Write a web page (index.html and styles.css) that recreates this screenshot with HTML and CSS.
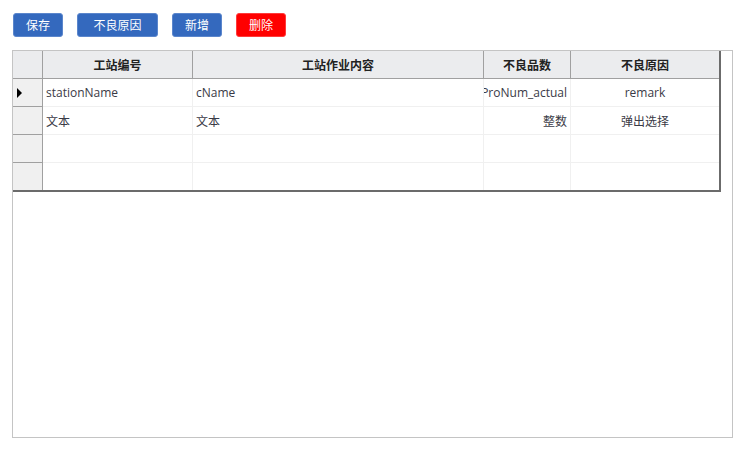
FILE: index.html
```html
<!DOCTYPE html>
<html>
<head>
<meta charset="utf-8">
<link rel="stylesheet" href="styles.css">
</head>
<body>
<div class="toolbar">
  <button class="btn w50">保存</button>
  <button class="btn w81">不良原因</button>
  <button class="btn w50">新增</button>
  <button class="btn w50 danger">删除</button>
</div>
<div class="panel">
  <div class="grid">
    <div class="row head">
      <div class="rh"></div>
      <div class="c c1">工站编号</div>
      <div class="c c2">工站作业内容</div>
      <div class="c c3">不良品数</div>
      <div class="c c4">不良原因</div>
    </div>
    <div class="row">
      <div class="rh"><span class="arrow"></span></div>
      <div class="c c1 left">stationName</div>
      <div class="c c2 left">cName</div>
      <div class="c c3 right">ProNum_actual</div>
      <div class="c c4 center">remark</div>
    </div>
    <div class="row">
      <div class="rh"></div>
      <div class="c c1 left">文本</div>
      <div class="c c2 left">文本</div>
      <div class="c c3 right">整数</div>
      <div class="c c4 center">弹出选择</div>
    </div>
    <div class="row">
      <div class="rh"></div>
      <div class="c c1"></div>
      <div class="c c2"></div>
      <div class="c c3"></div>
      <div class="c c4"></div>
    </div>
    <div class="row last">
      <div class="rh"></div>
      <div class="c c1"></div>
      <div class="c c2"></div>
      <div class="c c3"></div>
      <div class="c c4"></div>
    </div>
  </div>
</div>
</body>
</html>
```
FILE: styles.css
```css
* { box-sizing: border-box; }
html, body { margin: 0; padding: 0; background: #fff; }
body {
  padding: 13px 12px 0 12px;
  font-family: "Open Sans", "Noto Sans CJK SC", sans-serif;
  font-size: 12px;
  color: #333;
}
.toolbar { display: flex; gap: 14px; height: 24px; padding-left: 1px; }
.btn {
  height: 24px;
  padding: 0;
  border: 1px solid #5b86cc;
  border-radius: 3px;
  background: #3469be;
  color: #fff;
  font-family: "Noto Sans CJK SC", sans-serif;
  font-size: 12px;
  line-height: 22px;
}
.w50 { width: 50px; }
.w81 { width: 81px; }
.danger { background: #ff0000; border-color: #ff3b3b; }
.panel {
  margin-top: 13px;
  width: 721px;
  height: 388px;
  border: 1px solid #c4c4c4;
}
.grid {
  width: 708px;
  border-right: 2px solid #6b6b6b;
  border-bottom: 2px solid #6b6b6b;
}
.row { display: flex; height: 28px; }
.row.last { height: 27px; }
.row.last .c, .row.last .rh { border-bottom: none; }
.rh {
  width: 30px;
  background: #f0f0f0;
  border-right: 1px solid #a0a0a0;
  border-bottom: 1px solid #a0a0a0;
  display: flex;
  align-items: center;
  padding-left: 4px;
}
.arrow {
  width: 0; height: 0;
  border-top: 5px solid transparent;
  border-bottom: 5px solid transparent;
  border-left: 5px solid #000;
}
.c {
  border-right: 1px solid #f0f0f0;
  border-bottom: 1px solid #f0f0f0;
  display: flex;
  align-items: center;
  white-space: nowrap;
  overflow: hidden;
  padding: 0 3px;
  color: #3a3a46;
}
.c1 { width: 150px; }
.c2 { width: 291px; }
.c3 { width: 87px; }
.c4 { width: 148px; border-right: none; }
.head .c, .head .rh {
  background: #ebecee;
  border-right: 1px solid #a0a0a0;
  border-bottom: 1px solid #a0a0a0;
  justify-content: center;
  font-family: "Noto Sans CJK SC", sans-serif;
  font-weight: bold;
  color: #222;
}
.head .c4 { border-right: none; }
.left { justify-content: flex-start; }
.right { justify-content: flex-end; }
.center { justify-content: center; }
```
